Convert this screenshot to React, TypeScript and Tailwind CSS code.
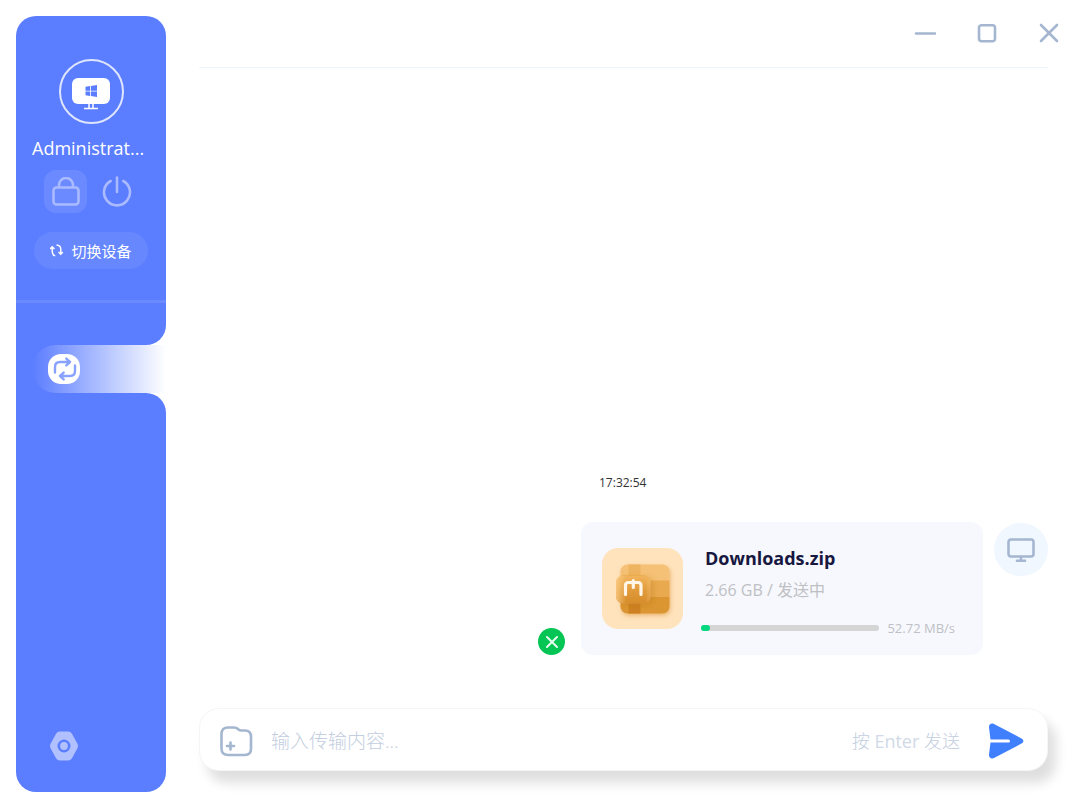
import React from 'react';
import { clsx } from 'clsx';

interface Transfer {
  id: string;
  name: string;
  size: string;
  status: string;
  speed: string;
  progress: number;
  time: string;
}

const transfers: Transfer[] = [
  {
    id: '1',
    name: 'Downloads.zip',
    size: '2.66 GB',
    status: '发送中',
    speed: '52.72 MB/s',
    progress: 5,
    time: '17:32:54',
  },
];

const shorten = (text: string, max: number) => (text.length > max ? `${text.slice(0, max)}...` : text);

const DeviceAvatar = () => (
  <div className="flex h-[65px] w-[65px] items-center justify-center rounded-full border-2 border-white/80 pt-1">
    <svg viewBox="0 0 38 32" className="h-8 w-[38px]" fill="none">
      <rect x="0" y="0" width="38" height="26" rx="6" fill="#fff" />
      <path d="M17 26v4.5M21 26v4.5M12 30.500h14" stroke="#fff" strokeWidth="1.5" />
      <path
        d="M13.5 8.7l4.6-.7v4.7h-4.6zM18.9 7.9l6.1-.9v5.7h-6.1zM13.5 13.4h4.6v4.6l-4.6-.7zM18.9 13.4H25V19l-6.1-.9z"
        fill="#5b7dff"
      />
    </svg>
  </div>
);

const Sidebar = () => (
  <aside className="flex w-[150px] shrink-0 flex-col">
    <div className="flex flex-col items-center rounded-t-[20px] rounded-br-[20px] bg-[#5b7dff] pt-[43px] pb-[42px]">
      <DeviceAvatar />
      <p className="mt-3 w-full px-4 text-[18px] leading-6 whitespace-nowrap text-white">{shorten('Administrator', 11)}</p>
      <div className="mt-[10px] flex items-center gap-2">
        <button
          aria-label="锁定"
          className="flex h-[43px] w-[43px] items-center justify-center rounded-xl bg-white/10"
        >
          <svg viewBox="0 0 28 30" className="h-[30px] w-7" fill="none" stroke="#a9baff" strokeWidth="2.6">
            <rect x="1.5" y="10.5" width="25" height="17" rx="3" />
            <path d="M7 10.500V8a7 7 0 0 1 14 0v2.5" />
          </svg>
        </button>
        <button aria-label="关机" className="flex h-[43px] w-[43px] items-center justify-center">
          <svg
            viewBox="0 0 30 32"
            className="h-8 w-[30px]"
            fill="none"
            stroke="#a9baff"
            strokeWidth="2.6"
            strokeLinecap="round"
          >
            <path d="M15 1.500v14.500" />
            <path d="M8.7 5a13 13 0 1 0 12.6 0" />
          </svg>
        </button>
      </div>
      <button className="mt-[19px] flex h-[37px] items-center gap-2 rounded-full bg-white/8 px-4 text-[15px] leading-5 text-white">
        <svg viewBox="0 0 14 14" className="h-[13px] w-[13px]" fill="none" stroke="#fff" strokeWidth="1.6">
          <path d="M5.600 12.800C3.300 12.200 2.400 10.200 2.400 8V4M0 5.400l2.400-2.400 2.400 2.400" />
          <path d="M7 1.200c3.200.2 4.600 2.100 4.600 4.500v4.600M9.200 8.600l2.400 2.400L14 8.600" />
        </svg>
        切换设备
      </button>
      <div className="mt-[31px] h-[3px] w-full bg-white/10" />
    </div>

    <div className="bg-[#5b7dff] pl-4">
      <button
        aria-label="文件传输"
        className="flex h-12 w-full items-center rounded-l-full bg-linear-to-r/srgb from-[#5b7dff] to-white pl-4"
      >
        <svg viewBox="0 0 32 30" className="h-[30px] w-8" fill="none">
          <rect width="32" height="30" rx="13" fill="#fff" />
          <g stroke="#8aa2ff" strokeWidth="2.4" strokeLinecap="round" strokeLinejoin="round">
            <path d="M7 18.500V13c0-3.500 1.500-5 5-5h10M18.300 4.600L22 8l-3.700 3.400" />
            <path d="M27 11.500V17c0 3.500-1.500 5-5 5H12M15.700 18.600L12 22l3.700 3.400" />
          </g>
        </svg>
      </button>
    </div>

    <div className="flex flex-1 flex-col justify-end rounded-tr-[20px] rounded-b-[20px] bg-[#5b7dff] pb-[31px] pl-[33px]">
      <button aria-label="设置" className="h-[30px] w-[30px]">
        <svg viewBox="0 0 30 30" className="h-[30px] w-[30px]">
          <path
            d="M11 5h8l5.500 10-5.500 10h-8L5.500 15z"
            fill="#b1c1ff"
            stroke="#b1c1ff"
            strokeWidth="9"
            strokeLinejoin="round"
          />
          <circle cx="15" cy="15" r="5.200" fill="none" stroke="#5b7dff" strokeWidth="2.600" />
        </svg>
      </button>
    </div>
  </aside>
);

const windowActions = [
  { label: '最小化', path: 'M2 12.500h19' },
  { label: '最大化', path: 'M5.500 4.200h11a2.500 2.500 0 0 1 2.500 2.500v11a2.500 2.500 0 0 1-2.500 2.500h-11a2.500 2.500 0 0 1-2.500-2.500v-11a2.500 2.500 0 0 1 2.500-2.500z' },
  { label: '关闭', path: 'M3 4l16 16M19 4l-16 16' },
];

const WindowControls = () => (
  <div className="flex justify-end gap-10 pr-5">
    {windowActions.map((action) => (
      <button key={action.label} aria-label={action.label}>
        <svg
          viewBox="0 0 22 24"
          className="h-6 w-[22px]"
          fill="none"
          stroke="#a5b6d0"
          strokeWidth="2.600"
          strokeLinecap="round"
        >
          <path d={action.path} />
        </svg>
      </button>
    ))}
  </div>
);

const ZipIcon = () => (
  <svg viewBox="0 0 81 81" className="h-[81px] w-[81px] shrink-0">
    <defs>
      <clipPath id="zip-box">
        <rect x="18.500" y="16.500" width="49" height="49" rx="7" />
      </clipPath>
      <linearGradient id="zip-badge" x1="0" y1="0" x2="0" y2="1">
        <stop offset="0" stopColor="#f2b45c" />
        <stop offset="0.550" stopColor="#e09a3a" />
        <stop offset="1" stopColor="#d68c2b" />
      </linearGradient>
      <linearGradient id="zip-glow" x1="0" y1="0" x2="1" y2="0">
        <stop offset="0" stopColor="#ffd492" stopOpacity="0.700" />
        <stop offset="0.300" stopColor="#ffd492" stopOpacity="0" />
        <stop offset="0.850" stopColor="#ffd492" stopOpacity="0" />
        <stop offset="1" stopColor="#ffd492" stopOpacity="0.300" />
      </linearGradient>
      <filter id="zip-shadow" x="-30%" y="-30%" width="160%" height="160%">
        <feDropShadow dx="1" dy="2" stdDeviation="2" floodColor="#d98a25" floodOpacity="0.500" />
      </filter>
      <filter id="badge-shadow" x="-30%" y="-30%" width="180%" height="180%">
        <feDropShadow dx="3" dy="2" stdDeviation="3" floodColor="#b9741c" floodOpacity="0.350" />
      </filter>
    </defs>
    <rect width="81" height="81" rx="16" fill="#ffe3bd" />
    <g filter="url(#zip-shadow)">
      <g clipPath="url(#zip-box)">
        <rect x="18" y="16" width="50" height="17" fill="#f5c176" />
        <rect x="18" y="32.500" width="50" height="16.500" fill="#e9aa50" />
        <rect x="18" y="49" width="50" height="17" fill="#db9632" />
        <rect x="26.500" y="16" width="12" height="17" fill="#efb45f" />
        <rect x="26.500" y="49" width="12" height="17" fill="#ce8122" />
        <rect x="14" y="27.500" width="34.500" height="28" rx="7" fill="#db9632" filter="url(#badge-shadow)" />
      </g>
    </g>
    <rect x="14" y="27.500" width="34.500" height="28" rx="7" fill="url(#zip-badge)" />
    <rect x="14" y="27.500" width="34.500" height="28" rx="7" fill="url(#zip-glow)" />
    <path
      d="M23.500 46.500V37.500c0-2 .8-3 3-3h9.500c2.200 0 3 1 3 3v9M31.300 32.500v7"
      fill="none"
      stroke="#fff6e8"
      strokeWidth="3.200"
      strokeLinecap="round"
    />
  </svg>
);

const TransferMessage: React.FC<{ transfer: Transfer }> = ({ transfer }) => (
  <div className="flex items-start justify-end">
    <button
      aria-label="取消传输"
      className="mr-4 flex h-[27px] w-[27px] items-center justify-center self-end rounded-full bg-[#05c555]"
    >
      <svg viewBox="0 0 12 12" className="h-3 w-3" stroke="#e6fbee" strokeWidth="2" strokeLinecap="round">
        <path d="M1 1l10 10M11 1L1 11" />
      </svg>
    </button>
    <div>
      <time className="mb-[29px] block pl-[18px] text-[12px] leading-5 text-[#333]">{transfer.time}</time>
      <div className="flex h-[133px] w-[402px] items-center rounded-xl bg-[#f6f8fd] pr-7 pl-[21px]">
        <ZipIcon />
        <div className="ml-[18px] min-w-0 flex-1 pt-[6px]">
          <h3 className="pl-1 text-[18px] leading-6 font-bold text-[#17173f]">{transfer.name}</h3>
          <p className="mt-2 pl-1 text-[16px] leading-6 text-[#bfc0c4]">
            {transfer.size} / {transfer.status}
          </p>
          <div className="mt-4 flex items-center gap-2">
            <div
              role="progressbar"
              aria-label={transfer.name}
              aria-valuenow={transfer.progress}
              className="h-[6px] flex-1 rounded-full bg-[#d5d5d5]"
            >
              <div className="h-full rounded-full bg-[#05d980]" style={{ width: `${transfer.progress}%` }} />
            </div>
            <span className="text-[13px] leading-5 text-[#bfc0c4]">{transfer.speed}</span>
          </div>
        </div>
      </div>
    </div>
    <div className="mt-[50px] ml-[11px] flex h-[53px] w-[54px] items-center justify-center rounded-full bg-[#f0f7ff]">
      <svg viewBox="0 0 28 24" className="h-6 w-7" fill="none" stroke="#a5b6d0" strokeWidth="2.600" strokeLinecap="round">
        <rect x="1.500" y="1.500" width="25" height="17" rx="2.500" />
        <path d="M14 19v3.500M10 22.700h8" />
      </svg>
    </div>
  </div>
);

const Composer = () => (
  <form
    onSubmit={(e) => e.preventDefault()}
    className="flex h-[63px] items-center rounded-[20px] border border-[#f5f5f5] bg-white pt-[3px] pr-[23px] pl-5 shadow-[8px_12px_12px_rgba(0,0,0,0.13)]"
  >
    <button type="button" aria-label="添加文件">
      <svg
        viewBox="0 0 33 31"
        className="h-[31px] w-[33px]"
        fill="none"
        stroke="#a5b6d0"
        strokeWidth="2.600"
        strokeLinecap="round"
        strokeLinejoin="round"
      >
        <path d="M8 1.500h6c2 0 3 .5 4 1.700.9 1.100 1.700 1.300 3 1.300h4c4.300 0 6 2 6 6.300v12c0 4.300-1.700 6.200-6 6.200H8c-4.300 0-6.500-2.200-6.500-6.500V8c0-4.300 2.200-6.500 6.500-6.500z" />
        <path d="M10.500 16.500v7M7 20h7" />
      </svg>
    </button>
    <input
      aria-label="输入传输内容"
      placeholder="输入传输内容..."
      className={clsx(
        'ml-[18px] min-w-0 flex-1 bg-transparent text-[19px] leading-6 text-slate-700 outline-none',
        'placeholder:font-light placeholder:text-[#c3cee0]'
      )}
    />
    <span className="text-[18px] leading-6 font-light text-[#c3cee0]">
      按 <span className="font-normal text-[#d0d9e7]">Enter</span> 发送
    </span>
    <button type="submit" aria-label="发送" className="ml-7">
      <svg viewBox="0 0 36 36" className="h-9 w-9">
        <path
          d="M1 4.500C.7 1.500 3.200-.3 6 1l27.500 14.400c2.500 1.300 2.500 3.900 0 5.200L6 35c-2.800 1.300-5.300-.5-5-3.500l1.500-12h18a1.500 1.500 0 0 0 0-3h-18z"
          fill="#4080ff"
        />
      </svg>
    </button>
  </form>
);

const App: React.FC = () => {
  return (
    <div className="flex h-screen bg-white py-4 pl-4 font-['Open_Sans','Noto_Sans_CJK_SC',sans-serif]">
      <Sidebar />
      <main className="flex min-w-0 flex-1 flex-col pl-[33px]">
        <header className="pt-[5px]">
          <WindowControls />
          <div className="mt-[22px] mr-8 border-t border-[#eef5fb]" />
        </header>
        <section className="flex flex-1 flex-col justify-end pr-8 pb-[53px]">
          {transfers.map((transfer) => (
            <TransferMessage key={transfer.id} transfer={transfer} />
          ))}
        </section>
        <footer className="pr-8 pb-[21px]">
          <Composer />
        </footer>
      </main>
    </div>
  );
};

export default App;
